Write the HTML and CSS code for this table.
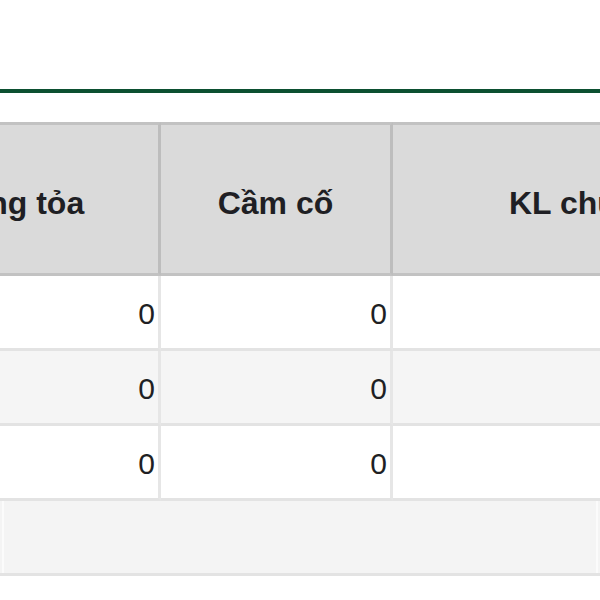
FILE: index.html
```html
<!DOCTYPE html>
<html lang="vi">
<head>
<meta charset="utf-8">
<link rel="stylesheet" href="styles.css">
</head>
<body>
<div class="page">
  <div class="tabbar"></div>
  <div class="table-wrap">
    <table class="grid">
      <colgroup>
        <col class="c1">
        <col class="c2">
        <col class="c3">
      </colgroup>
      <thead>
        <tr>
          <th>Phong tỏa</th>
          <th>Cầm cố</th>
          <th>KL chuyển nhượng</th>
        </tr>
      </thead>
      <tbody>
        <tr>
          <td class="num">0</td>
          <td class="num">0</td>
          <td class="num"></td>
        </tr>
        <tr class="alt">
          <td class="num">0</td>
          <td class="num">0</td>
          <td class="num"></td>
        </tr>
        <tr>
          <td class="num">0</td>
          <td class="num">0</td>
          <td class="num"></td>
        </tr>
        <tr class="foot">
          <td colspan="3"><div class="foot-inner"></div></td>
        </tr>
      </tbody>
    </table>
  </div>
</div>
</body>
</html>
```

FILE: styles.css
```css
html, body {
  margin: 0;
  padding: 0;
  background: #ffffff;
}

body {
  width: 600px;
  height: 600px;
  overflow: hidden;
  font-family: "Liberation Sans", Arial, sans-serif;
  color: #1f1f24;
}

.page {
  width: 600px;
  overflow: hidden;
}

.tabbar {
  height: 89px;
  border-bottom: 4px solid #0c5031;
  margin-bottom: 29px;
}

.table-wrap {
  margin-left: -146px;
}

.grid {
  border-collapse: separate;
  border-spacing: 0;
  table-layout: fixed;
  width: 1070px;
}

.c1 { width: 307px; }
.c2 { width: 232px; }
.c3 { width: 531px; }

.grid th {
  height: 140px;
  padding: 8px 0 0 0;
  background: #dadada;
  border-top: 3px solid #c2c2c2;
  border-bottom: 3px solid #c2c2c2;
  border-right: 3px solid #bdbdbd;
  font-size: 32px;
  font-weight: bold;
  text-align: center;
  vertical-align: middle;
  white-space: nowrap;
}

.grid td {
  height: 68px;
  padding: 4px 3px 0 0;
  border-bottom: 3px solid #e3e3e3;
  border-right: 3px solid #e6e6e6;
  font-size: 30px;
  background: #ffffff;
  vertical-align: middle;
}

.grid td.num {
  text-align: right;
}

.grid tr.alt td {
  background: #f5f5f5;
}

.grid tr.foot td {
  background: #f4f4f4;
  padding: 0;
  height: 72px;
}

.foot-inner {
  height: 72px;
  margin-left: 148px;
  width: 596px;
  border-left: 2px solid #fbfbfb;
  border-right: 2px solid #fbfbfb;
  box-sizing: border-box;
}
```
